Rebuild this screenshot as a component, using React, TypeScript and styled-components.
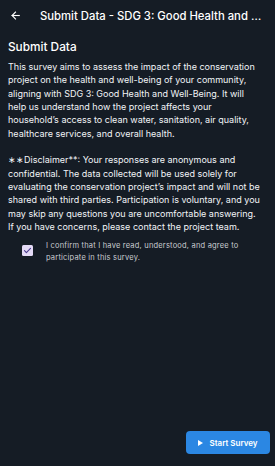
import React from "react";
import styled, { createGlobalStyle } from "styled-components";

const Global = createGlobalStyle`
  html, body { margin: 0; padding: 0; background: #151c25; }
  body { font-family: Inter, "Noto Sans", sans-serif; -webkit-font-smoothing: antialiased; }
`;

const Page = styled.div`
  width: 275px;
  height: 466px;
  background: #151c25;
  color: #ffffff;
  display: flex;
  flex-direction: column;
  box-sizing: border-box;
  overflow: hidden;
`;

const TopBar = styled.header`
  height: 31px;
  display: flex;
  align-items: center;
  padding: 0 0 0 10px;
  gap: 20px;
  flex-shrink: 0;
`;

const BackButton = styled.button`
  background: none;
  border: none;
  padding: 0;
  width: 10px;
  height: 10px;
  display: flex;
  align-items: center;
  justify-content: center;
  color: #ffffff;
`;

const Title = styled.h1`
  margin: 0;
  font-size: 11.3px;
  line-height: 16px;
  font-weight: 500;
  white-space: nowrap;
  overflow: hidden;
  text-overflow: ellipsis;
  flex: 1;
  min-width: 0;
  padding-right: 6px;
`;

const Content = styled.main`
  flex: 1;
  display: flex;
  flex-direction: column;
  padding: 8px 8px 12px 8px;
`;

const Heading = styled.h2`
  margin: 0 0 5px 0;
  font-size: 11.8px;
  font-weight: 500;
  line-height: 16px;
`;

const Paragraph = styled.p<{ $gapAfter?: boolean }>`
  margin: 0 0 ${(p) => (p.$gapAfter ? "13.35px" : "0")} 0;
  font-size: 9px;
  line-height: 13.35px;
  color: #f2f4f7;
`;

const Line = styled.span`
  display: block;
  white-space: nowrap;
`;

const ConfirmRow = styled.label`
  display: flex;
  align-items: flex-start;
  gap: 13px;
  margin: 7px 0 0 14px;
`;

const Box = styled.span`
  width: 11px;
  height: 11px;
  margin-top: 5px;
  border-radius: 1.5px;
  background: #e4daf6;
  display: flex;
  align-items: center;
  justify-content: center;
  flex-shrink: 0;
`;

const ConfirmText = styled.span`
  font-size: 7.5px;
  line-height: 11.3px;
  letter-spacing: 0.2px;
  color: #c9ccd1;
`;

const Spacer = styled.div`
  flex: 1;
`;

const Footer = styled.div`
  display: flex;
  justify-content: flex-end;
  margin-right: -3px;
`;

const PrimaryButton = styled.button`
  width: 84px;
  height: 23px;
  border: none;
  border-radius: 4px;
  background: #2b87e3;
  color: #ffffff;
  display: flex;
  align-items: center;
  justify-content: center;
  gap: 6px;
  font-family: Inter, "Noto Sans", sans-serif;
  font-size: 8px;
  font-weight: 600;
  padding: 0;
`;

const intro = [
  "This survey aims to assess the impact of the conservation",
  "project on the health and well-being of your community,",
  "aligning with SDG 3: Good Health and Well-Being. It will",
  "help us understand how the project affects your",
  "household\u2019s access to clean water, sanitation, air quality,",
  "healthcare services, and overall health.",
];

const disclaimer = [
  "\u2217\u2217Disclaimer**: Your responses are anonymous and",
  "confidential. The data collected will be used solely for",
  "evaluating the conservation project\u2019s impact and will not be",
  "shared with third parties. Participation is voluntary, and you",
  "may skip any questions you are uncomfortable answering.",
  "If you have concerns, please contact the project team.",
];

export default function App() {
  return (
    <>
      <Global />
      <Page>
        <TopBar>
          <BackButton aria-label="Back">
            <svg width="9" height="9" viewBox="0 0 24 24" fill="none" stroke="#fff" strokeWidth="3" strokeLinecap="square" strokeLinejoin="miter">
              <path d="M22 12H3" />
              <path d="M12 3l-9 9 9 9" />
            </svg>
          </BackButton>
          <Title>Submit Data - SDG 3: Good Health and Well-Being</Title>
        </TopBar>
        <Content>
          <Heading>Submit Data</Heading>
          <Paragraph $gapAfter>
            {intro.map((l) => (
              <Line key={l}>{l}</Line>
            ))}
          </Paragraph>
          <Paragraph>
            {disclaimer.map((l) => (
              <Line key={l}>{l}</Line>
            ))}
          </Paragraph>
          <ConfirmRow>
            <Box>
              <svg width="9" height="9" viewBox="0 0 24 24" fill="none" stroke="#4a3a8c" strokeWidth="3" strokeLinecap="round" strokeLinejoin="round">
                <path d="M4 12.5l5 5L20 6.5" />
              </svg>
            </Box>
            <ConfirmText>I confirm that I have read, understood, and agree to participate in this survey.</ConfirmText>
          </ConfirmRow>
          <Spacer />
          <Footer>
            <PrimaryButton>
              <svg width="5" height="6" viewBox="0 0 5 6">
                <path d="M0 0L5 3L0 6Z" fill="#fff" />
              </svg>
              Start Survey
            </PrimaryButton>
          </Footer>
        </Content>
      </Page>
    </>
  );
}
